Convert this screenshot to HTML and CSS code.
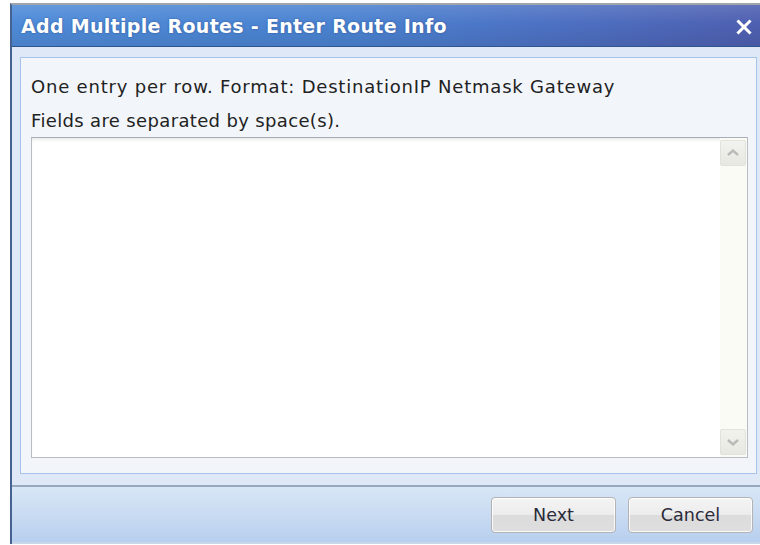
FILE: index.html
```html
<!DOCTYPE html>
<html lang="en">
<head>
<meta charset="utf-8">
<title>Add Multiple Routes</title>
<link rel="stylesheet" href="styles.css">
</head>
<body>
<div class="dialog">
  <div class="titlebar">
    <span class="title">Add Multiple Routes - Enter Route Info</span>
    <button class="close" aria-label="Close">
      <svg width="16" height="16" viewBox="0 0 16 16"><path d="M2.5 2.5 L13.5 13.5 M13.5 2.5 L2.5 13.5" stroke="#fff" stroke-width="3" stroke-linecap="square" fill="none"/></svg>
    </button>
  </div>
  <div class="body">
    <div class="panel">
      <p class="hint hint-format">One entry per row. Format: DestinationIP Netmask Gateway</p>
      <p class="hint hint-sep">Fields are separated by space(s).</p>
      <div class="editor">
        <textarea class="routes" spellcheck="false"></textarea>
        <div class="scrollbar">
          <span class="sb-btn">
            <svg width="14" height="10" viewBox="0 0 14 10"><path d="M2 7 L7 2.5 L12 7" stroke="#b9bbb8" stroke-width="2.4" fill="none"/></svg>
          </span>
          <span class="sb-track"></span>
          <span class="sb-btn">
            <svg width="14" height="10" viewBox="0 0 14 10"><path d="M2 3 L7 7.5 L12 3" stroke="#b9bbb8" stroke-width="2.4" fill="none"/></svg>
          </span>
        </div>
      </div>
    </div>
  </div>
  <div class="footer">
    <button class="btn">Next</button>
    <button class="btn">Cancel</button>
  </div>
</div>
</body>
</html>
```
FILE: styles.css
```css
*, *::before, *::after {
  box-sizing: border-box;
}

html, body {
  margin: 0;
  padding: 0;
  background: #fff;
  overflow: hidden;
  width: 760px;
  height: 545px;
}

.dialog {
  margin: 3px 0 0 10px;
  width: 752px;
  border-top: 2px solid #a0a4ab;
  border-left: 2px solid #46638f;
  font-family: "DejaVu Sans", Verdana, sans-serif;
}

.titlebar {
  height: 42px;
  display: flex;
  align-items: center;
  justify-content: space-between;
  padding: 0 10px 0 9px;
  background:
    linear-gradient(180deg, rgba(255,255,255,0.12) 0%, rgba(255,255,255,0) 45%, rgba(0,0,0,0.08) 100%),
    linear-gradient(90deg, #4f8bd8 0%, #4a82d0 45%, #4d72c4 70%, #4e5fb0 100%);
  border-bottom: 1px solid #2e5590;
}

.title {
  color: #fff;
  font-weight: bold;
  font-size: 19px;
  letter-spacing: 0.3px;
  text-shadow: 0 0 2px rgba(20, 50, 110, 0.6);
}

.close {
  border: 0;
  background: none;
  padding: 0;
  margin: 2px 0 0 0;
  width: 16px;
  height: 16px;
  display: flex;
}

.body {
  background: #dfe8f6;
  padding: 10px 0 11px 8px;
}

.panel {
  width: 737px;
  background: #f2f6fb;
  border: 1px solid #a6c3ea;
  padding: 19px 0 15px 10px;
}

.hint {
  margin: 0 0 14px 0;
  font-size: 18px;
  line-height: 20px;
  color: #222;
  white-space: nowrap;
}

.hint-format {
  letter-spacing: 0.8px;
}

.hint-sep {
  letter-spacing: 0.35px;
  margin-bottom: 6px;
}

.editor {
  width: 717px;
  height: 321px;
  display: flex;
  background: #fff;
  border: 1px solid #b9bcc4;
  border-top-color: #a9adb6;
  box-shadow: inset 0 3px 4px -2px rgba(0,0,0,0.12);
}

.routes {
  flex: 1;
  border: 0;
  margin: 0;
  padding: 4px;
  resize: none;
  background: transparent;
  font-family: "DejaVu Sans", sans-serif;
  font-size: 14px;
  outline: none;
}

.scrollbar {
  width: 27px;
  display: flex;
  flex-direction: column;
  background: #fbfbf6;
  padding: 2px 1px 2px 0;
}

.sb-btn {
  height: 26px;
  border: 1px solid #e2e2da;
  border-radius: 2px;
  background: linear-gradient(180deg, #f2f2ee 0%, #e8e8e2 100%);
  display: flex;
  align-items: center;
  justify-content: center;
}

.sb-track {
  flex: 1;
}

.footer {
  height: 59px;
  width: 750px;
  border-top: 2px solid #9aa8bd;
  border-bottom: 2px solid #c8d6e8;
  display: flex;
  justify-content: flex-end;
  align-items: center;
  gap: 12px;
  padding: 0 9px 0 0;
  background: linear-gradient(180deg, #d8e7f6 0%, #c9dbf2 50%, #b7cfee 100%);
}

.btn {
  width: 125px;
  height: 36px;
  border: 1px solid #b3b3b3;
  border-radius: 4px;
  background: linear-gradient(180deg, #f4f4f4 0%, #ececec 50%, #dcdcdc 51%, #dedede 100%);
  box-shadow: inset 0 0 0 1px rgba(255,255,255,0.8);
  font-family: "DejaVu Sans", Verdana, sans-serif;
  font-size: 17.5px;
  color: #2a2a3a;
  padding: 0;
}
```
